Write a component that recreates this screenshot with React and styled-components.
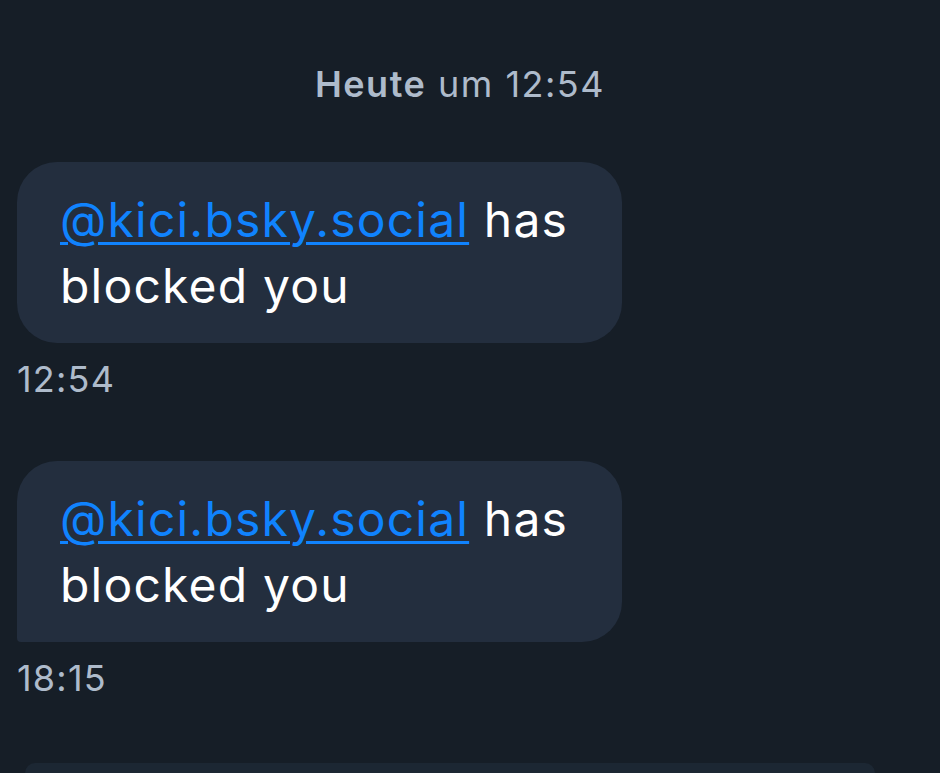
import React from "react";
import styled, { createGlobalStyle } from "styled-components";

const Global = createGlobalStyle`
  html, body { margin: 0; padding: 0; background: #161e27; }
  body { font-family: Inter, "Noto Sans", sans-serif; overflow: hidden; }
`;

const Page = styled.div`
  width: 940px;
  height: 773px;
  box-sizing: border-box;
  padding: 58px 20px 0 17px;
  display: flex;
  flex-direction: column;
  overflow: hidden;
  background: #161e27;
`;

const DateHeader = styled.div`
  text-align: center;
  font-size: 36px;
  line-height: 52px;
  letter-spacing: 1.5px;
  color: #aebbcb;
  padding-right: 17px;
  margin-bottom: 52px;
  b { font-weight: 600; }
`;

const Group = styled.div`
  display: flex;
  flex-direction: column;
  align-items: flex-start;
  margin-bottom: ${(p) => p.$gap}px;
`;

const Bubble = styled.div`
  width: 605px;
  box-sizing: border-box;
  padding: 25px 43px 24px;
  background: #232e3e;
  border-radius: ${(p) => (p.$last ? "40px 40px 40px 4px" : "40px")};
  color: #ffffff;
  font-size: 48px;
  line-height: 66px;
  letter-spacing: 1.2px;
`;

const Mention = styled.a`
  color: #1083fe;
  text-decoration: underline;
  text-decoration-thickness: 3px;
  text-underline-offset: 5px;
`;

const Time = styled.div`
  margin-top: 14px;
  font-size: 36px;
  line-height: 44px;
  letter-spacing: 1.2px;
  color: #aebbcb;
`;

const Composer = styled.div`
  margin: 0 45px 0 8px;
  height: 80px;
  border-radius: 40px 40px 0 0;
  background: #1c2733;
`;

function Message({ time, last, gap }) {
  return (
    <Group $gap={gap}>
      <Bubble $last={last}>
        <Mention href="#">@kici.bsky.social</Mention> has blocked you
      </Bubble>
      <Time>{time}</Time>
    </Group>
  );
}

export default function App() {
  return (
    <>
      <Global />
      <Page>
        <DateHeader>
          <b>Heute</b> um 12:54
        </DateHeader>
        <Message time="12:54" gap={60} />
        <Message time="18:15" last gap={63} />
        <Composer />
      </Page>
    </>
  );
}
